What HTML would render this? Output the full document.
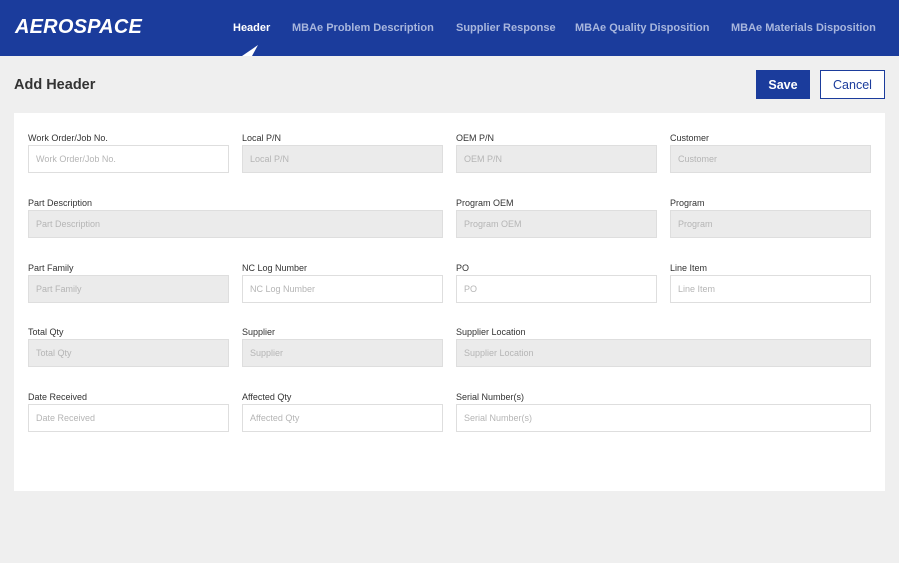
<!DOCTYPE html>
<html><head><style>
*{box-sizing:border-box;margin:0;padding:0}
body{width:899px;height:563px;background:#efefef;font-family:"Liberation Sans",sans-serif;position:relative;overflow:hidden}
.top{position:absolute;left:0;top:0;width:899px;height:56px;background:#1b3c9c}
.logo{position:absolute;left:15px;top:16px;color:#fff;font-size:20px;font-weight:bold;font-style:italic;letter-spacing:0.2px}
.nav{position:absolute;top:22px;font-size:11px;font-weight:bold;color:#a8b6dd;white-space:nowrap}
.nav.a{color:#fff}
h1{position:absolute;left:14px;top:77px;font-size:14.5px;font-weight:bold;color:#333}
.btn{position:absolute;top:70px;height:29px;font-size:12.5px;text-align:center;line-height:28px}
.save{left:756px;width:54px;background:#1b3c9c;color:#fff;border:1px solid #1b3c9c;font-weight:bold}
.cancel{left:820px;width:65px;background:#fff;color:#1b3c9c;border:1px solid #1b3c9c}
.card{position:absolute;left:14px;top:113px;width:871px;height:378px;background:#fff}
.l{position:absolute;font-size:9px;color:#333}
.i{position:absolute;height:28px;border:1px solid #dedede;font-size:9px;color:#b5b5b5;padding-left:7px;line-height:27px;background:#fff}
.g{background:#ebebeb}
</style></head><body>
<div class="top">
<div class="logo">AEROSPACE</div>
<div class="nav a" style="left:233px">Header</div>
<div class="nav" style="left:292px">MBAe Problem Description</div>
<div class="nav" style="left:456px">Supplier Response</div>
<div class="nav" style="left:575px">MBAe Quality Disposition</div>
<div class="nav" style="left:731px">MBAe Materials Disposition</div>
<svg style="position:absolute;left:240px;top:44px" width="20" height="12"><polygon points="2,12 18,1 12,12" fill="#fff"/></svg>
</div>
<h1>Add Header</h1>
<div class="btn save">Save</div>
<div class="btn cancel">Cancel</div>
<div class="card"></div>

<div class="l" style="left:28px;top:133px">Work Order/Job No.</div><div class="i" style="left:28px;top:145px;width:201px">Work Order/Job No.</div>
<div class="l" style="left:242px;top:133px">Local P/N</div><div class="i g" style="left:242px;top:145px;width:201px">Local P/N</div>
<div class="l" style="left:456px;top:133px">OEM P/N</div><div class="i g" style="left:456px;top:145px;width:201px">OEM P/N</div>
<div class="l" style="left:670px;top:133px">Customer</div><div class="i g" style="left:670px;top:145px;width:201px">Customer</div>

<div class="l" style="left:28px;top:198px">Part Description</div><div class="i g" style="left:28px;top:210px;width:415px">Part Description</div>
<div class="l" style="left:456px;top:198px">Program OEM</div><div class="i g" style="left:456px;top:210px;width:201px">Program OEM</div>
<div class="l" style="left:670px;top:198px">Program</div><div class="i g" style="left:670px;top:210px;width:201px">Program</div>

<div class="l" style="left:28px;top:263px">Part Family</div><div class="i g" style="left:28px;top:275px;width:201px">Part Family</div>
<div class="l" style="left:242px;top:263px">NC Log Number</div><div class="i" style="left:242px;top:275px;width:201px">NC Log Number</div>
<div class="l" style="left:456px;top:263px">PO</div><div class="i" style="left:456px;top:275px;width:201px">PO</div>
<div class="l" style="left:670px;top:263px">Line Item</div><div class="i" style="left:670px;top:275px;width:201px">Line Item</div>

<div class="l" style="left:28px;top:327px">Total Qty</div><div class="i g" style="left:28px;top:339px;width:201px">Total Qty</div>
<div class="l" style="left:242px;top:327px">Supplier</div><div class="i g" style="left:242px;top:339px;width:201px">Supplier</div>
<div class="l" style="left:456px;top:327px">Supplier Location</div><div class="i g" style="left:456px;top:339px;width:415px">Supplier Location</div>

<div class="l" style="left:28px;top:392px">Date Received</div><div class="i" style="left:28px;top:404px;width:201px">Date Received</div>
<div class="l" style="left:242px;top:392px">Affected Qty</div><div class="i" style="left:242px;top:404px;width:201px">Affected Qty</div>
<div class="l" style="left:456px;top:392px">Serial Number(s)</div><div class="i" style="left:456px;top:404px;width:415px">Serial Number(s)</div>
</body></html>
